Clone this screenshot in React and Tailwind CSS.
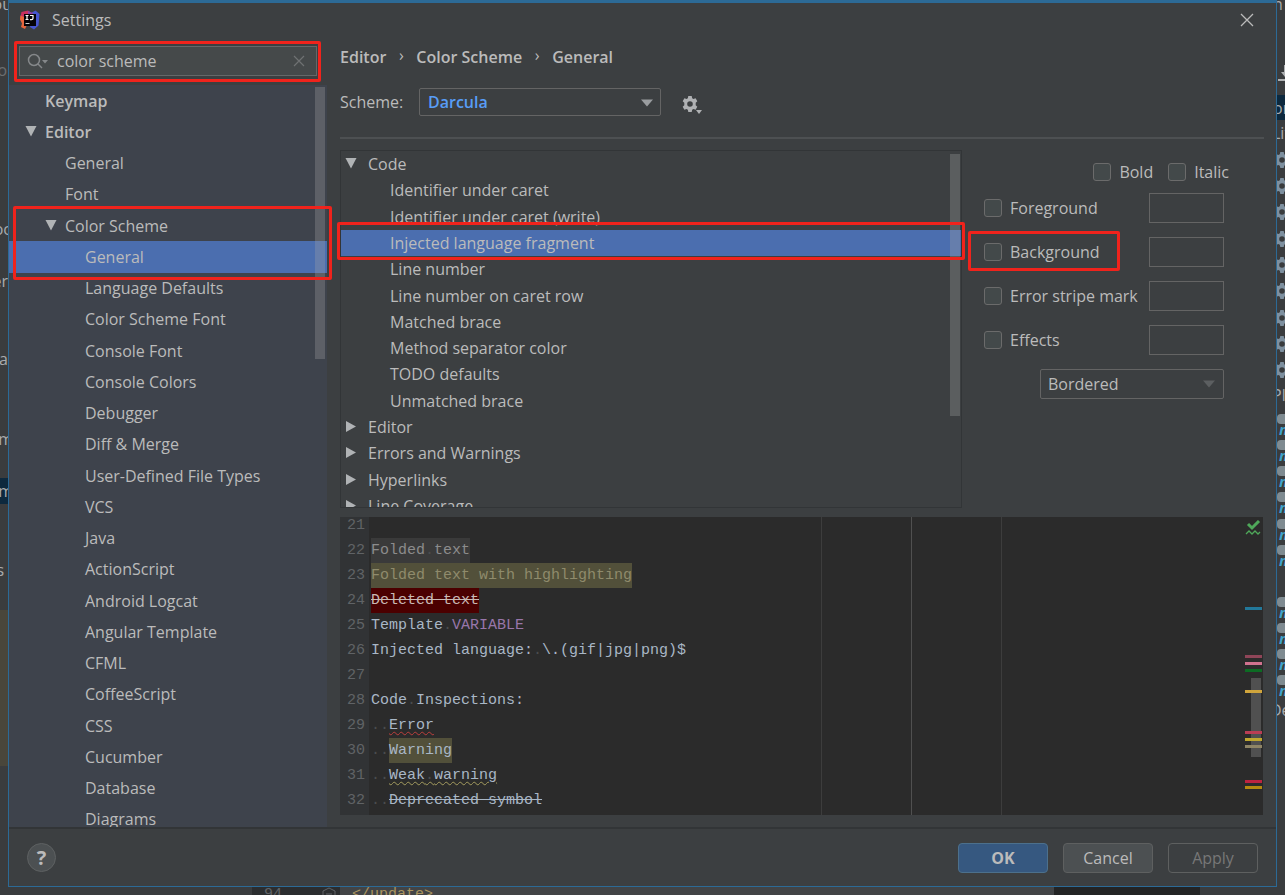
import { useState } from 'react'
import clsx from 'clsx'

const SETTINGS = [
  { name: 'Keymap', pad: 'pl-[36px]', bold: true },
  { name: 'Editor', pad: 'pl-[16px]', bold: true, open: true },
  { name: 'General', id: 'editor-general', pad: 'pl-[56px]' },
  { name: 'Font', pad: 'pl-[56px]' },
  { name: 'Color Scheme', pad: 'pl-[36px]', open: true },
  { name: 'General', id: 'scheme-general', pad: 'pl-[76px]' },
  { name: 'Language Defaults', pad: 'pl-[76px]' },
  { name: 'Color Scheme Font', pad: 'pl-[76px]' },
  { name: 'Console Font', pad: 'pl-[76px]' },
  { name: 'Console Colors', pad: 'pl-[76px]' },
  { name: 'Debugger', pad: 'pl-[76px]' },
  { name: 'Diff & Merge', pad: 'pl-[76px]' },
  { name: 'User-Defined File Types', pad: 'pl-[76px]' },
  { name: 'VCS', pad: 'pl-[76px]' },
  { name: 'Java', pad: 'pl-[76px]' },
  { name: 'ActionScript', pad: 'pl-[76px]' },
  { name: 'Android Logcat', pad: 'pl-[76px]' },
  { name: 'Angular Template', pad: 'pl-[76px]' },
  { name: 'CFML', pad: 'pl-[76px]' },
  { name: 'CoffeeScript', pad: 'pl-[76px]' },
  { name: 'CSS', pad: 'pl-[76px]' },
  { name: 'Cucumber', pad: 'pl-[76px]' },
  { name: 'Database', pad: 'pl-[76px]' },
  { name: 'Diagrams', pad: 'pl-[76px]' },
]

const ATTRIBUTES = [
  { name: 'Code', state: 'open' },
  { name: 'Identifier under caret' },
  { name: 'Identifier under caret (write)' },
  { name: 'Injected language fragment' },
  { name: 'Line number' },
  { name: 'Line number on caret row' },
  { name: 'Matched brace' },
  { name: 'Method separator color' },
  { name: 'TODO defaults' },
  { name: 'Unmatched brace' },
  { name: 'Editor', state: 'closed' },
  { name: 'Errors and Warnings', state: 'closed' },
  { name: 'Hyperlinks', state: 'closed' },
  { name: 'Line Coverage', state: 'closed' },
]

const STRIPES = [
  { top: 'top-[90px]', color: 'bg-[#22789a]' },
  { top: 'top-[138px]', color: 'bg-[#8f4558]' },
  { top: 'top-[145px]', color: 'bg-[#d0728f]' },
  { top: 'top-[152px]', color: 'bg-[#0c6b23]' },
  { top: 'top-[173px]', color: 'bg-[#d0a53c]' },
  { top: 'top-[214px]', color: 'bg-[#b93d54]' },
  { top: 'top-[221px]', color: 'bg-[#bfa72f]' },
  { top: 'top-[228px]', color: 'bg-[#8f8566]' },
  { top: 'top-[263px]', color: 'bg-[#bd2340]' },
  { top: 'top-[269px]', color: 'bg-[#b58a10]' },
]

const LEFT_SCRAPS = [
  { text: 'ou', place: 'top-[-6px] right-[-4px]' },
  { text: 'o', place: 'top-[60px] right-px', dim: true },
  { text: 'oc', place: 'top-[219px] right-[-3px]' },
  { text: 'er', place: 'top-[271px] right-0' },
  { text: 'ta', place: 'top-[349px] right-0' },
  { text: 'm', place: 'top-[429px] right-[-5px]' },
  { text: 'm', place: 'top-[481px] right-[-5px]' },
  { text: 's', place: 'top-[560px] right-1' },
]

const GEARS = ['top-[152px]', 'top-[178px]', 'top-[204px]', 'top-[231px]', 'top-[257px]', 'top-[283px]', 'top-[310px]', 'top-[336px]', 'top-[362px]']
const GOALS = ['top-[414px]', 'top-[440px]', 'top-[466px]', 'top-[492px]', 'top-[519px]', 'top-[545px]', 'top-[597px]', 'top-[623px]', 'top-[649px]', 'top-[675px]']

function Arrow({ open, className }) {
  return (
    <svg viewBox="0 0 12 12" className={clsx('w-3 h-3 shrink-0 fill-[#b0b3b5]', className)}>
      {open ? <path d="M0.5 0h11L6 10.5z" /> : <path d="M1 0v11l10-5.5z" />}
    </svg>
  )
}

function Gear({ className }) {
  return (
    <svg viewBox="0 0 16 16" className={className} fill="currentColor">
      <path
        fillRule="evenodd"
        d="M6.3 0h3.4l.5 2.2 1.2.7 2.2-.7 1.7 3-1.6 1.5v2.6l1.6 1.5-1.7 3-2.2-.7-1.2.7-.5 2.2H6.3l-.5-2.2-1.2-.7-2.2.7-1.7-3 1.6-1.5V6.7L.7 5.2l1.7-3 2.2.7 1.2-.7zM8 5.2a2.8 2.8 0 1 0 0 5.6 2.8 2.8 0 0 0 0-5.6z"
      />
    </svg>
  )
}

function Logo() {
  return (
    <svg viewBox="0 0 20 20" className="w-5 h-5">
      <path d="M1.5 2L8 .5l3 2-2 9-6 1L0 8.500z" fill="#c9305f" />
      <path d="M.5 5.500L4 7l3 8-2 4-4-2 1-3.500-2-4z" fill="#e8663c" />
      <path d="M12 2.500L15.500.5 19.500 4l-1 11.500L14 19.500 10 17z" fill="#4656cf" />
      <path d="M8 1l5 2-1 4H8z" fill="#8c3fa8" />
      <rect x="4" y="4" width="12" height="12" fill="#050308" />
      <path d="M5.500 5.500h3M7 5.500v4M5.500 9.500h3M10 5.500h3v2.800q0 1.300-1.500 1.300H10" stroke="#fff" strokeWidth="1.200" fill="none" />
      <path d="M5.500 13.500h4" stroke="#ccc" strokeWidth="1" />
    </svg>
  )
}

// the IDE window that shows around the edges of the dialog
function Backdrop() {
  return (
    <div aria-hidden="true" className="absolute inset-0 overflow-hidden bg-[#3a3c3e] text-base leading-5 text-[#a9abad]">
      <div className="absolute left-0 top-[478px] w-2 h-[26px] bg-[#0d293e]" />
      <div className="absolute left-0 top-[610px] w-2 h-[156px] bg-[#49463b]" />
      <div className="absolute left-0 top-0 w-2 h-full overflow-hidden">
        {LEFT_SCRAPS.map(s => (
          <span key={s.place} className={clsx('absolute', s.place, s.dim && 'text-[#6c6e70]')}>{s.text}</span>
        ))}
      </div>

      <div className="absolute right-0 top-0 w-2 h-full overflow-hidden">
        <span className="absolute left-[-4px] top-[-6px]">n</span>
        <svg viewBox="0 0 16 16" className="absolute left-0 top-[65px] w-4 h-4 fill-[#afb1b3]">
          <path d="M7 0h2v7h3l-4 5-4-5h3zM1 14h14v2H1z" />
        </svg>
        <div className="absolute inset-x-0 top-[95px] h-[25px] bg-[#0d293e]" />
        <span className="absolute left-[-4px] top-[98px]">or</span>
        <span className="absolute left-[-5px] top-[123px]">Lif</span>
        {GEARS.map(top => (
          <Gear key={top} className={clsx('absolute left-[-3px] w-4 h-4 text-[#7e909f]', top)} />
        ))}
        <span className="absolute left-[-5px] top-[385px]">Pl</span>
        {GOALS.map(top => (
          <div key={top} className={clsx('absolute left-0 w-4 h-5', top)}>
            <div className="w-4 h-[10px] rounded-l bg-[#7f8b91]" />
            <div className="pl-[2px] text-[15px] leading-[10px] font-bold italic text-[#3fa3cc]">m</div>
          </div>
        ))}
        <span className="absolute left-[-7px] top-[700px]">De</span>
      </div>

      <div className="absolute inset-x-0 bottom-0 flex h-2 overflow-hidden font-['Liberation_Mono',monospace] text-[15px] leading-4">
        <div className="w-[252px] bg-[#3a3c3e]" />
        <div className="w-[88px] flex justify-between bg-[#2b2d2f] pl-3 pr-1 text-[#606366]">
          <span>94</span>
          <svg viewBox="0 0 14 14" className="w-[14px] h-[14px]" fill="none" stroke="#606366">
            <path d="M1 13V4l6-3 6 3v9zM4 7h6" />
          </svg>
        </div>
        <div className="flex-1 bg-[#424446] pl-3 text-[#a8935f]">&lt;/update&gt;</div>
        <div className="w-[146px] bg-[#232425]" />
        <div className="w-[85px] bg-[#3a3c3e]" />
      </div>
    </div>
  )
}

function Sidebar() {
  const [query, setQuery] = useState('color scheme')
  const [selected, setSelected] = useState('scheme-general')

  return (
    <aside className="w-[318px] shrink-0 flex flex-col bg-[#3e434c]">
      <div className="bg-[#3c3f41] pl-[10px] pr-[10px] pt-[7px] pb-[9px]">
        <div className="flex items-center h-[30px] border border-[#646869] bg-[#45494a] px-[7px]">
          <svg viewBox="0 0 22 18" className="w-[22px] h-[18px] shrink-0" fill="none" stroke="#85888a" strokeWidth="1.5">
            <circle cx="7" cy="8" r="5.5" />
            <path d="M11 12l4 4" />
            <path d="M15 8h6l-3 3.5z" fill="#85888a" stroke="none" />
          </svg>
          <input
            type="text"
            aria-label="Search settings"
            value={query}
            onChange={e => setQuery(e.target.value)}
            className="flex-1 min-w-0 pl-[8px] bg-transparent outline-none text-[#bbbbbb]"
          />
          <button type="button" aria-label="Clear search" onClick={() => setQuery('')} className="p-1">
            <svg viewBox="0 0 12 12" className="w-3 h-3" stroke="#6f7173" strokeWidth="1.2">
              <path d="M1 1l10 10M11 1L1 11" />
            </svg>
          </button>
        </div>
      </div>

      <div className="relative flex-1 min-h-0 overflow-hidden">
        <ul className="flex flex-col h-[750px]">
          {SETTINGS.map(item => {
            const id = item.id || item.name
            return (
              <li key={id} className="flex-1 min-h-0 flex">
                <button
                  type="button"
                  onClick={() => setSelected(id)}
                  className={clsx('w-full flex items-center text-left', item.pad, item.bold && 'font-semibold', selected === id && 'bg-[#4b6eaf]')}
                >
                  {item.open && <Arrow open className="mr-2" />}
                  {item.name}
                </button>
              </li>
            )
          })}
        </ul>
        <div className="absolute right-[2px] top-[2px] w-[10px] h-[272px] bg-[#a6a6a6]/30" />
      </div>
    </aside>
  )
}

function Check({ label }) {
  return (
    <label className="flex items-center gap-2">
      <input type="checkbox" className="appearance-none w-[18px] h-[18px] rounded-[3px] border border-[#6b6b6b] bg-[#43494a] checked:bg-[#4b6eaf]" />
      {label}
    </label>
  )
}

function Attributes() {
  const [selected, setSelected] = useState('Injected language fragment')

  return (
    <div className="relative flex-1 min-w-0 overflow-hidden border border-[#323537]">
      <ul className="flex flex-col h-[368px]">
        {ATTRIBUTES.map(a => (
          <li key={a.name} className="flex-1 min-h-0 flex">
            <button
              type="button"
              onClick={() => setSelected(a.name)}
              className={clsx('w-full flex items-center text-left', a.state ? 'pl-[4px]' : 'pl-[49px]', selected === a.name && 'bg-[#4b6eaf]')}
            >
              {a.state && <Arrow open={a.state === 'open'} className="mr-[11px]" />}
              {a.name}
            </button>
          </li>
        ))}
      </ul>
      <div className="absolute right-[1px] top-[3px] w-[10px] h-[262px] bg-[#a6a6a6]/30" />
    </div>
  )
}

function StylePanel() {
  return (
    <div className="w-[302px] shrink-0 pl-[22px] pr-[40px] pt-[12px]">
      <div className="flex justify-end gap-[15px] h-[20px] mr-[-5px]">
        <Check label="Bold" />
        <Check label="Italic" />
      </div>
      <div className="flex flex-col gap-[14px] mt-[11px]">
        {['Foreground', 'Background', 'Error stripe mark', 'Effects'].map(name => (
          <div key={name} className="flex items-center justify-between h-[30px]">
            <Check label={name} />
            <button type="button" aria-label={`${name} color`} className="w-[75px] h-[30px] border border-[#646464]" />
          </div>
        ))}
        <div className="relative self-end w-[184px] h-[30px]">
          <select aria-label="Effect type" className="appearance-none w-full h-full rounded-[2px] border border-[#646464] px-[7px] bg-[#3c3f41]">
            <option>Bordered</option>
            <option>Underscored</option>
          </select>
          <svg viewBox="0 0 12 8" className="pointer-events-none absolute right-[9px] top-[11px] w-3 h-2 fill-[#5c5f61]">
            <path d="M0 0.5h12L6 7.5z" />
          </svg>
        </div>
      </div>
    </div>
  )
}

function Dot({ n = 1 }) {
  return <span className="text-[#4a4c4e]">{'.'.repeat(n)}</span>
}

const CODE = [
  [21, null],
  [22, <span className="inline-block bg-[#3a3a3a] text-[#8c8c8c]">Folded<Dot />text</span>],
  [23, <span className="inline-block bg-[#52503a] text-[#8f8b6c]">Folded text with highlighting</span>],
  [24, <span className="inline-block bg-[#4b0000] text-[#c9b9b4] line-through">Deleted text</span>],
  [25, <>Template<Dot /><span className="text-[#9876aa]">VARIABLE</span></>],
  [26, <>Injected language:<Dot />\.(gif|jpg|png)$</>],
  [27, null],
  [28, <>Code<Dot />Inspections:</>],
  [29, <><Dot n={2} /><span className="underline decoration-wavy decoration-1 decoration-[#bc3f3c] underline-offset-2">Error</span></>],
  [30, <><Dot n={2} /><span className="inline-block bg-[#52503a]">Warning</span></>],
  [31, <><Dot n={2} /><span className="underline decoration-wavy decoration-1 decoration-[#a39b5e] underline-offset-2">Weak<Dot />warning</span></>],
  [32, <><Dot n={2} /><span className="line-through">Deprecated symbol</span></>],
]

function Preview() {
  return (
    <div className="relative mt-[9px] h-[298px] mr-[13px] overflow-hidden bg-[#2b2b2b] font-['Liberation_Mono',monospace] text-[15px] leading-[25px] text-[#a9b7c6]">
      <div className="absolute inset-y-0 left-0 w-[29px] bg-[#313335]" />
      <div className="absolute inset-y-0 left-[481px] w-px bg-[#3d3d3d]" />
      <div className="absolute inset-y-0 left-[571px] w-px bg-[#505050]" />
      <div className="absolute inset-y-0 left-[661px] w-px bg-[#3d3d3d]" />

      <div className="relative -mt-1">
        {CODE.map(([n, line]) => (
          <div key={n} className="flex h-[25px]">
            <span className="w-[31px] pl-[7px] shrink-0 text-[#606366]">{n}</span>
            <code className="whitespace-pre font-['Liberation_Mono',monospace]">{line}</code>
          </div>
        ))}
      </div>

      <svg viewBox="0 0 16 16" className="absolute right-[2px] top-[3px] w-4 h-4" fill="none">
        <path d="M3 4l4 4 7-7" stroke="#4fa85a" strokeWidth="3" />
        <path d="M1 14l3-3 3 3 3-3 3 3 2-2" stroke="#4fa85a" strokeWidth="1.3" />
      </svg>
      <div className="absolute right-[2px] top-[161px] w-[10px] h-[79px] bg-[#a6a6a6]/30" />
      {STRIPES.map(s => (
        <div key={s.top} className={clsx('absolute right-[1px] w-[17px] h-[3px]', s.top, s.color)} />
      ))}
    </div>
  )
}

function Highlights() {
  return (
    <div aria-hidden="true" className="pointer-events-none">
      <div className="absolute left-[5px] top-[38px] w-[307px] h-[41px] rounded-[2px] border-3 border-[#f0231c]" />
      <div className="absolute left-[4px] top-[203px] w-[319px] h-[74px] rounded-[2px] border-3 border-[#f0231c]" />
      <div className="absolute left-[328px] right-[311px] top-[219px] h-[38px] rounded-[2px] border-3 border-[#f0231c]" />
      <div className="absolute right-[156px] top-[228px] w-[152px] h-[40px] rounded-[2px] border-3 border-[#f0231c]" />
    </div>
  )
}

export default function App() {
  return (
    <div className="relative flex h-screen overflow-hidden font-['Open_Sans',sans-serif] text-base text-[#bbbbbb]">
      <Backdrop />

      <div role="dialog" aria-label="Settings" className="relative flex-1 min-w-0 mx-2 mb-2 flex flex-col border border-t-3 border-[#2c6a96] bg-[#3c3f41]">
        <header className="flex items-center h-[36px] shrink-0 pl-[11px] pr-[22px] pb-[3px]">
          <Logo />
          <h1 className="ml-3 flex-1">Settings</h1>
          <button type="button" aria-label="Close">
            <svg viewBox="0 0 14 14" className="w-[14px] h-[14px]" stroke="#bbbbbb" strokeWidth="1.3">
              <path d="M1 1l12 12M13 1L1 13" />
            </svg>
          </button>
        </header>

        <div className="flex flex-1 min-h-0">
          <Sidebar />

          <main className="flex-1 min-w-0 flex flex-col pl-[13px]">
            <nav className="flex items-center h-[36px] font-semibold">
              <a href="#editor">Editor</a>
              <span className="w-[30px] text-center pb-1 font-normal">›</span>
              <a href="#scheme">Color Scheme</a>
              <span className="w-[30px] text-center pb-1 font-normal">›</span>
              <a href="#general">General</a>
            </nav>

            <div className="flex items-center h-[28px] mt-[13px]">
              <label htmlFor="scheme" className="w-[79px]">Scheme:</label>
              <div className="relative w-[242px] h-[28px]">
                <select id="scheme" className="appearance-none w-full h-full rounded-[2px] border border-[#646464] px-2 bg-[#3c3f41] font-semibold text-[#589df6]">
                  <option>Darcula</option>
                  <option>Default</option>
                </select>
                <svg viewBox="0 0 12 8" className="pointer-events-none absolute right-[8px] top-[11px] w-3 h-2 fill-[#9a9da0]">
                  <path d="M0 0.5h12L6 7.5z" />
                </svg>
              </div>
              <button type="button" aria-label="Scheme actions" className="flex items-end ml-[21px] pt-1">
                <Gear className="w-4 h-4 text-[#afb1b3]" />
                <svg viewBox="0 0 6 4" className="w-[6px] h-1 -ml-[2px] -mb-[2px] fill-[#afb1b3]">
                  <path d="M0 0h6L3 4z" />
                </svg>
              </button>
            </div>

            <div className="mt-[21px] mb-[11px] mr-[12px] h-[2px] shrink-0 bg-[#4d5052]" />

            <div className="flex flex-1 min-h-0 pr-[12px]">
              <Attributes />
              <StylePanel />
            </div>

            <Preview />
            <div className="h-3 shrink-0" />
          </main>
        </div>

        <footer className="flex items-center gap-[15px] h-[59px] shrink-0 border-t-2 border-[#323537] pl-[18px] pr-[18px]">
          <button type="button" aria-label="Help" className="w-[29px] h-[29px] mr-auto rounded-full border border-[#5e6162] bg-[#4c5052] text-xl leading-[26px] font-bold">?</button>
          <button type="button" className="w-[90px] h-[30px] rounded-[4px] border border-[#4c708c] bg-[#365880] font-bold">OK</button>
          <button type="button" className="w-[90px] h-[30px] rounded-[4px] border border-[#5e6060] bg-[#4c5052]">Cancel</button>
          <button type="button" disabled className="w-[90px] h-[30px] rounded-[4px] border border-[#5e6060] text-[#777777]">Apply</button>
        </footer>

        <Highlights />
      </div>
    </div>
  )
}
